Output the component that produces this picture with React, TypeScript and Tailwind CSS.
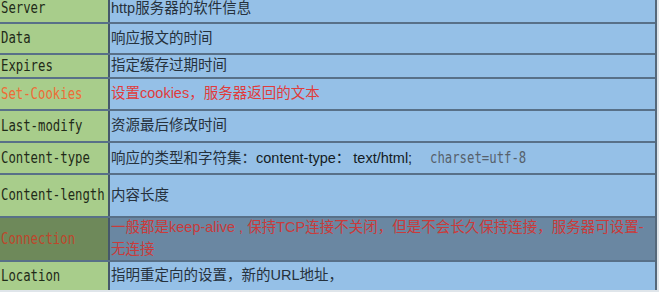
import React from 'react';

const mono = "font-['DejaVu_Sans_Mono',monospace]";
const sans = "font-['Liberation_Sans','Noto_Sans_CJK_SC',sans-serif]";

type Row = {
  key: string;
  h: string;
  keyColor?: string;
  dark?: boolean;
  top?: boolean;
  value: React.ReactNode;
};

function Mono({ children, className = '' }: { children: React.ReactNode; className?: string }) {
  return (
    <span className={`${mono} inline-block origin-left scale-x-[0.82] whitespace-pre text-[15px] ${className}`}>
      {children}
    </span>
  );
}

const rows: Row[] = [
  { key: 'Server', h: 'h-[24px]', top: true, value: 'http服务器的软件信息' },
  { key: 'Data', h: 'h-[31px]', value: '响应报文的时间' },
  { key: 'Expires', h: 'h-[24px]', value: '指定缓存过期时间' },
  {
    key: 'Set-Cookies',
    h: 'h-[32px]',
    keyColor: 'text-[#ee6c36]',
    value: <span className="text-[#e03c3c]">设置cookies，服务器返回的文本</span>,
  },
  { key: 'Last-modify', h: 'h-[32px]', value: '资源最后修改时间' },
  {
    key: 'Content-type',
    h: 'h-[32px]',
    value: (
      <>
        响应的类型和字符集：<span className="text-[#141c24]">content-type：</span>
        <span className="ml-[3px] text-[#141c24]">text/html;</span>
        <Mono className="ml-[18px] text-[#56616c]">charset=utf-8</Mono>
      </>
    ),
  },
  { key: 'Content-length', h: 'h-[43px]', value: '内容长度' },
  {
    key: 'Connection',
    h: 'h-[44px]',
    dark: true,
    keyColor: 'text-[#bd472c]',
    value: (
      <span className="text-[#c93b3b] leading-[17px]">
        一般都是keep-alive , 保持TCP连接不关闭，但是不会长久保持连接，服务器可设置-
        <br />
        无连接
      </span>
    ),
  },
  { key: 'Location', h: 'h-[28px]', value: '指明重定向的设置，新的URL地址，' },
];

export default function App() {
  return (
    <div className="w-[659px] h-[292px] bg-[#dfe5ea] overflow-hidden">
      <div className="w-[657px] h-[290px] flex flex-col border-r-2 border-[#55687a] bg-[#95c0e7]">
        {rows.map((r, i) => (
          <div
            key={r.key}
            className={`flex ${r.h} ${i < rows.length - 1 ? 'border-b-2 border-[#587088]' : ''}`}
          >
            <div
              className={`w-[110px] shrink-0 flex pl-[1px] border-r-2 border-[#45586a] ${
                r.top ? 'items-start pt-[1px] leading-[15px]' : 'items-center'
              } ${r.dark ? 'bg-[#6e895a]' : 'bg-[#a8cd8b]'}`}
            >
              <Mono className={r.keyColor ?? 'text-[#1f2a18]'}>{r.key}</Mono>
            </div>
            <div
              className={`flex-1 flex pl-[1px] overflow-hidden whitespace-nowrap ${sans} text-[14.5px] text-[#26313c] ${
                r.top ? 'items-start pt-[1px] leading-[15px]' : 'items-center'
              } ${r.dark ? 'bg-[#6a87a2]' : 'bg-[#95c0e7]'}`}
            >
              <div>{r.value}</div>
            </div>
          </div>
        ))}
      </div>
    </div>
  );
}
